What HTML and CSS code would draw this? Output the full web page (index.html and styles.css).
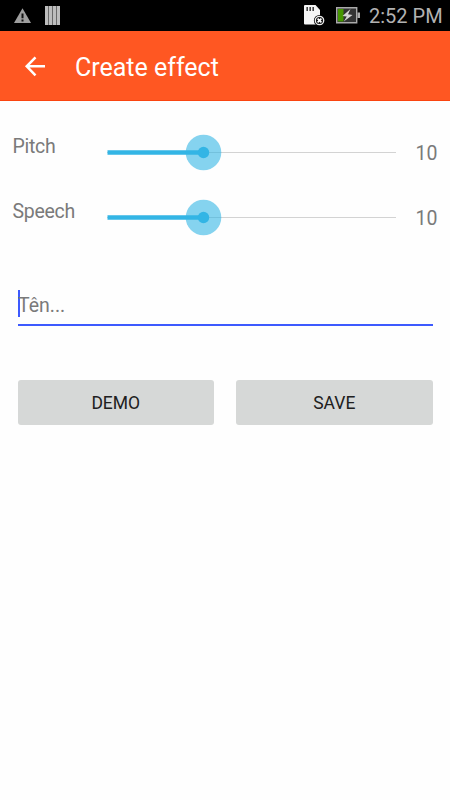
FILE: index.html
```html
<!DOCTYPE html>
<html lang="en">
<head>
<meta charset="utf-8">
<title>Create effect</title>
<link rel="stylesheet" href="styles.css">
</head>
<body>
<div class="status">
  <svg class="status-left" width="64" height="31" viewBox="0 0 64 31">
    <path d="M22.500 8.300 31 23H14Z" fill="#9e9e9e"/>
    <path d="M22.500 13.500v4.700M22.500 19.400v2" stroke="#111" stroke-width="2"/>
    <path d="M45 6h15v19H45z" fill="#bdbdbd"/>
    <path d="M48.500 6v19M52.500 6v19M56.500 6v19" stroke="#696969"/>
  </svg>
  <svg class="status-right" width="62" height="31" viewBox="300 0 62 31">
    <path d="M305 5h10.500l4.500 5v14.500h-15q-1 0-1-1V6q0-1 1-1z" fill="#f5f5f5"/>
    <path d="M307.200 7v4M310.200 7v4M313.200 7v4" stroke="#444" stroke-width="1.600"/>
    <circle cx="319.500" cy="20.500" r="5.600" fill="#000"/>
    <circle cx="319.500" cy="20.500" r="4.200" fill="#111" stroke="#eee" stroke-width="1.300"/>
    <path d="m317.600 18.600 3.800 3.800m0-3.800-3.800 3.800" stroke="#fff" stroke-width="1.700"/>
    <path d="M336.700 7.700h20v15h-20z" fill="#333" stroke="#aaa" stroke-width="1.400"/>
    <path d="M338 9h5.500v12.500H338z" fill="#459600"/>
    <path d="M357.500 12.500h2.500v5.500h-2.500z" fill="#aaa"/>
    <path d="m350.500 9-8 7 4.300.5-3 5 8.700-6.500-4.500-.7z" fill="#d5d5d5"/>
  </svg>
  <span class="clock">2:52 PM</span>
</div>
<header class="bar">
  <svg class="back" width="22" height="22" viewBox="0 0 22 22"><path d="M21 11.300H3M11.500 2.300 2.700 11.300 11.500 20.300" fill="none" stroke="#fff" stroke-width="2.500"/></svg>
  <h1 class="title">Create effect</h1>
</header>
<main class="content">
  <div class="row">
    <span class="label">Pitch</span>
    <svg class="slider" width="290" height="38" viewBox="0 0 290 38">
      <path class="track" d="M0 18.500h289"/>
      <path class="fill" d="M.5 18.500h96"/>
      <circle class="halo" cx="96.500" cy="18.500" r="17.800"/>
      <circle class="dot" cx="96.500" cy="18.500" r="5.700"/>
    </svg>
    <span class="value">10</span>
  </div>
  <div class="row">
    <span class="label">Speech</span>
    <svg class="slider" width="290" height="38" viewBox="0 0 290 38">
      <path class="track" d="M0 18.500h289"/>
      <path class="fill" d="M.5 18.500h96"/>
      <circle class="halo" cx="96.500" cy="18.500" r="17.800"/>
      <circle class="dot" cx="96.500" cy="18.500" r="5.700"/>
    </svg>
    <span class="value">10</span>
  </div>
  <div class="field"><span class="caret"></span><span class="hint">Tên...</span></div>
  <div class="actions">
    <button class="button">DEMO</button>
    <button class="button">SAVE</button>
  </div>
</main>
</body>
</html>
```
FILE: styles.css
```css
* { box-sizing: border-box; }
body {
  margin: 0;
  height: 800px;
  overflow: hidden;
  background: #fefefe;
  color: #7a7a7a;
  font-family: Roboto, sans-serif;
}
.status {
  display: flex;
  height: 31px;
  background: #000;
}
.status-right { margin-left: 236px; }
.clock {
  margin-left: 7px;
  color: #b2b2b2;
  font-size: 20px;
  line-height: 32px;
  white-space: nowrap;
}
.bar {
  display: flex;
  align-items: center;
  height: 70px;
  padding-left: 24px;
  background: #ff5722;
  border-bottom: 1px solid #fa4410;
}
.back { margin-top: 1px; }
.title {
  margin: 4px 0 0 29px;
  color: #fff;
  font-size: 25px;
  font-weight: 400;
}
.content { padding-top: 19px; }
.row {
  display: flex;
  align-items: center;
  height: 65px;
  padding: 0 12.500px;
  font-size: 19.500px;
}
.label { width: 94.500px; margin-top: -13px; letter-spacing: -.3px; }
.slider { flex: none; margin-top: 1px; }
.track { stroke: #d3d3d3; }
.fill { stroke: #33b5e5; stroke-width: 4.500; }
.halo { fill: #33b5e5; fill-opacity: .6; }
.dot { fill: #33b5e5; }
.value { margin: 2px 0 0 auto; }
.field {
  display: flex;
  align-items: center;
  height: 36px;
  margin: 40px 17.500px 0;
  border-bottom: 2px solid #3d5afe;
}
.caret { width: 2px; height: 27px; margin: -7px -2px 0 0; background: #3d5afe; }
.hint { margin: -4px 0 0 .5px; font-size: 19.500px; }
.actions {
  display: flex;
  gap: 22px;
  margin: 54px 17.500px 0;
}
.button {
  flex: 1;
  height: 45px;
  padding: 1px 0 0;
  border: 0;
  border-radius: 3px;
  background: #d6d8d7;
  color: #202020;
  font: 17.500px Roboto, sans-serif;
}
```
